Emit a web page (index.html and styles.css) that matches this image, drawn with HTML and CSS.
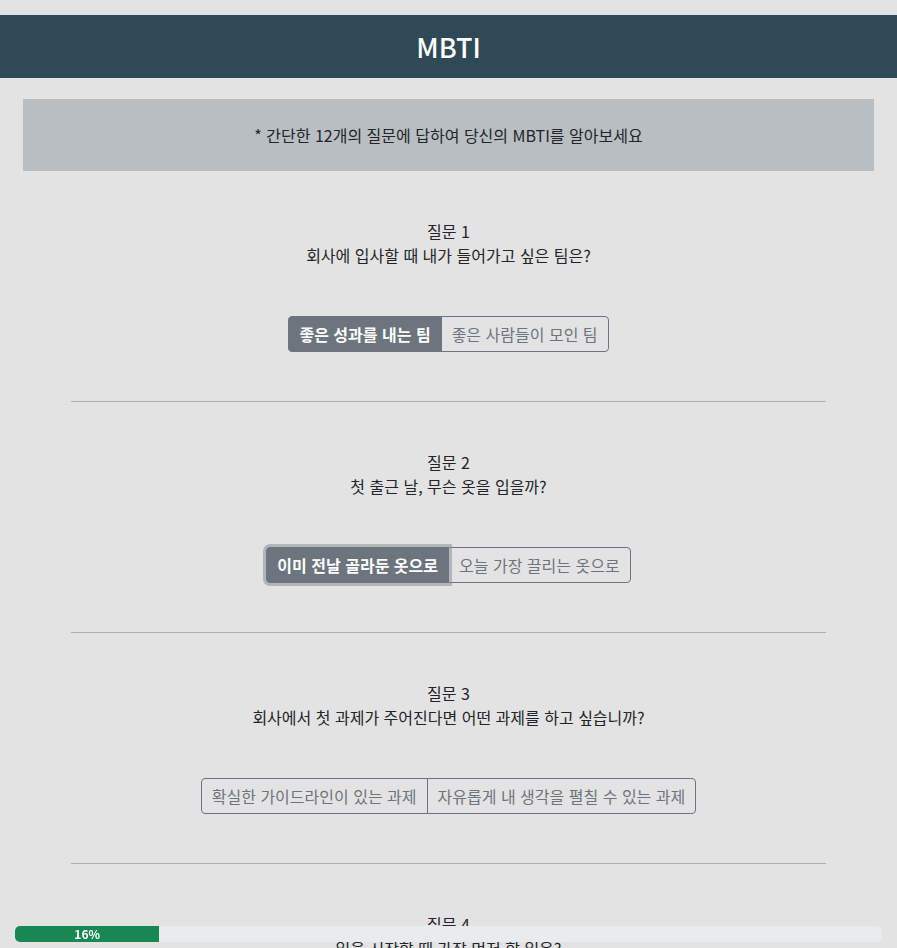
FILE: index.html
```html
<!DOCTYPE html>
<html lang="ko">
<head>
<meta charset="utf-8">
<title>MBTI</title>
<link rel="stylesheet" href="styles.css">
</head>
<body>
<header class="topbar"><h1 class="title">MBTI</h1></header>
<main class="container">
  <div class="intro">* 간단한 12개의 질문에 답하여 당신의 MBTI를 알아보세요</div>

  <section class="question">
    <p class="q-label">질문 1</p>
    <p class="q-text">회사에 입사할 때 내가 들어가고 싶은 팀은?</p>
    <div class="btn-group">
      <button class="btn active">좋은 성과를 내는 팀</button>
      <button class="btn">좋은 사람들이 모인 팀</button>
    </div>
  </section>
  <hr class="divider">

  <section class="question">
    <p class="q-label">질문 2</p>
    <p class="q-text">첫 출근 날, 무슨 옷을 입을까?</p>
    <div class="btn-group">
      <button class="btn active focus">이미 전날 골라둔 옷으로</button>
      <button class="btn">오늘 가장 끌리는 옷으로</button>
    </div>
  </section>
  <hr class="divider">

  <section class="question">
    <p class="q-label">질문 3</p>
    <p class="q-text">회사에서 첫 과제가 주어진다면 어떤 과제를 하고 싶습니까?</p>
    <div class="btn-group">
      <button class="btn">확실한 가이드라인이 있는 과제</button>
      <button class="btn">자유롭게 내 생각을 펼칠 수 있는 과제</button>
    </div>
  </section>
  <hr class="divider">

  <section class="question">
    <p class="q-label">질문 4</p>
    <p class="q-text">일을 시작할 때 가장 먼저 할 일은?</p>
    <div class="btn-group">
      <button class="btn">계획을 세운다</button>
      <button class="btn">일단 시작한다</button>
    </div>
  </section>
</main>
<div class="progress">
  <div class="progress-fill" style="width:16.66%">16%</div>
</div>
</body>
</html>
```

FILE: styles.css
```css
html, body {
  margin: 0;
  padding: 0;
}
body {
  background: #e3e3e3;
  font-family: "Noto Sans CJK KR", "Noto Sans", sans-serif;
  color: #212529;
  font-size: 16px;
  line-height: 1.5;
  padding-top: 13px;
  padding-bottom: 60px;
}
.topbar {
  background: #304957;
  border-top: 2px solid #dde3e7;
  height: 63px;
  display: flex;
  align-items: center;
  justify-content: center;
}
.title {
  margin: 0;
  color: #ffffff;
  font-size: 27px;
  font-weight: 500;
  line-height: 1;
}
.container {
  width: 851px;
  margin: 0 auto;
  padding-top: 21px;
}
.intro {
  background: #b9bec2;
  height: 72px;
  display: flex;
  align-items: center;
  justify-content: center;
  font-size: 16px;
  margin-bottom: 48px;
}
.question {
  text-align: center;
  padding-bottom: 49px;
}
.q-label, .q-text {
  margin: 0;
  font-size: 16px;
  line-height: 24px;
}
.btn-group {
  display: inline-flex;
  margin-top: 49px;
}
.btn {
  font-family: inherit;
  font-size: 16px;
  line-height: 24px;
  padding: 5px 10px;
  border: 1px solid #6c757d;
  background: transparent;
  color: #6c757d;
  cursor: pointer;
}
.btn:first-child {
  border-radius: 4px 0 0 4px;
}
.btn:last-child {
  border-radius: 0 4px 4px 0;
  margin-left: -1px;
}
.btn.active {
  background: #6c757d;
  color: #ffffff;
  font-weight: 700;
}
.btn.focus {
  box-shadow: 0 0 0 3px rgba(130, 138, 145, 0.5);
  position: relative;
  z-index: 1;
}
.divider {
  margin: 0 48px 48px;
  border: 0;
  border-top: 1px solid #b0b0b0;
}
.progress {
  position: fixed;
  left: 15px;
  right: 15px;
  bottom: 6px;
  height: 16px;
  background: #e9ecef;
  border-radius: 5px;
  overflow: hidden;
  display: flex;
}
.progress-fill {
  background: #198754;
  color: #ffffff;
  font-size: 12px;
  font-weight: 700;
  line-height: 16px;
  text-align: center;
}
```
